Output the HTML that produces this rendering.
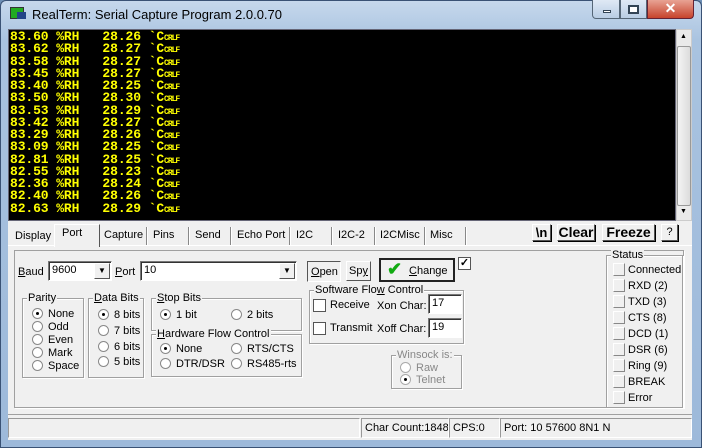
<!DOCTYPE html>
<html><head><meta charset="utf-8"><style>
*{margin:0;padding:0;box-sizing:border-box}
body{width:702px;height:448px;overflow:hidden;background:#6d8fb5;font-family:"Liberation Sans",sans-serif;font-size:11px;color:#000;position:relative}
.a{position:absolute}
#frame{left:0;top:0;width:702px;height:448px;border-radius:6px 6px 0 0;background:linear-gradient(#c6d8ec,#a9c3e0 40px,#9db9da);border:1px solid #3a5275}
#term{left:8px;top:29px;width:668px;height:192px;background:#000;border:1px solid #667;overflow:hidden}
#term pre{font-family:"Liberation Mono",monospace;font-weight:bold;font-size:13px;line-height:12.25px;color:#ff0;padding:1px 0 0 1px;letter-spacing:-0.1px}
#term pre small{font-size:8px;letter-spacing:-1px;line-height:0}
#sb{left:676px;top:29px;width:16px;height:192px;background:#eaeaea;border:1px solid #ccc}
#client{left:8px;top:221px;width:684px;height:219px;background:#f0f0f0}
.tab{position:absolute;top:8px;white-space:nowrap}
.sep{position:absolute;top:6px;width:2px;height:18px;border-left:1px solid #888;border-right:1px solid #fff}
.btn{position:absolute;background:#f0f0f0;border:1px solid;border-color:#fff #555 #555 #fff;box-shadow:1px 1px 0 #000;text-align:center;white-space:nowrap}
.grp{position:absolute;border:1px solid #a0a0a0;box-shadow:inset 1px 1px 0 #fff, 1px 1px 0 #fff}
.grp>.t{position:absolute;top:-8px;left:4px;background:#f0f0f0;padding:0 1px;line-height:14px;white-space:nowrap}
.r{position:absolute;width:11px;height:11px;border-radius:50%;background:#fff;border:1px solid #888}
.r.on::after{content:"";position:absolute;left:3px;top:3px;width:3px;height:3px;border-radius:50%;background:#000}
.lbl{position:absolute;white-space:nowrap;line-height:14px}
.edit{position:absolute;background:#fff;border:1px solid;border-color:#777 #fff #fff #777;box-shadow:inset 1px 1px 0 #333;padding:2px 3px;white-space:nowrap}
.led{position:absolute;width:12px;height:13px;border:1px solid;border-color:#fff #888 #888 #fff;background:#f0f0f0}
.st{position:absolute;top:197px;height:20px;border:1px solid;border-color:#999 #fff #fff #999;padding:3px 3px;font-size:11px;white-space:nowrap;overflow:hidden}
u{text-decoration:underline}
</style></head><body>
<div id="frame" class="a"></div>
<div class="a" style="left:10px;top:7px;width:14px;height:12px;background:#2a2;border:1px solid #333"></div>
<div class="a" style="left:17px;top:12px;width:9px;height:7px;background:#248;"></div>
<div class="a" style="left:32px;top:7px;font-size:13px;color:#000">RealTerm: Serial Capture Program 2.0.0.70</div>
<div class="a" style="left:592px;top:0;width:28px;height:19px;border:1px solid #567;border-top:none;border-radius:0 0 0 4px;background:linear-gradient(#dfe9f5,#b9cde4)"></div>
<div class="a" style="left:603px;top:10px;width:8px;height:3px;background:#fff;border:1px solid #345"></div>
<div class="a" style="left:620px;top:0;width:27px;height:19px;border:1px solid #567;border-top:none;background:linear-gradient(#dfe9f5,#b9cde4)"></div>
<div class="a" style="left:628px;top:5px;width:11px;height:9px;border:2px solid #345;background:#fff"></div>
<div class="a" style="left:647px;top:0;width:47px;height:19px;border:1px solid #623;border-top:none;border-radius:0 0 4px 0;background:linear-gradient(#e8a394,#c7432c);color:#fff;font-weight:bold;text-align:center;font-size:14px;line-height:17px">✕</div>
<div id="term" class="a"><pre>83.60 %RH   28.26 `C<small>CRLF</small>
83.62 %RH   28.27 `C<small>CRLF</small>
83.58 %RH   28.27 `C<small>CRLF</small>
83.45 %RH   28.27 `C<small>CRLF</small>
83.40 %RH   28.25 `C<small>CRLF</small>
83.50 %RH   28.30 `C<small>CRLF</small>
83.53 %RH   28.29 `C<small>CRLF</small>
83.42 %RH   28.27 `C<small>CRLF</small>
83.29 %RH   28.26 `C<small>CRLF</small>
83.09 %RH   28.25 `C<small>CRLF</small>
82.81 %RH   28.25 `C<small>CRLF</small>
82.55 %RH   28.23 `C<small>CRLF</small>
82.36 %RH   28.24 `C<small>CRLF</small>
82.40 %RH   28.26 `C<small>CRLF</small>
82.63 %RH   28.29 `C<small>CRLF</small></pre></div>
<div id="sb" class="a"><div class="a" style="left:3px;top:3px;font-size:7px">▲</div><div class="a" style="left:0;top:16px;width:14px;height:160px;background:linear-gradient(90deg,#f4f4f4,#dcdcdc);border:1px solid #999;border-radius:2px"></div><div class="a" style="left:3px;top:178px;font-size:7px">▼</div></div>
<div id="client" class="a">
 <div class="a" style="left:0;top:24px;width:684px;height:1px;background:#fff"></div>
 <div class="a" style="left:46px;top:3px;width:46px;height:23px;border:1px solid #fff;border-right:1px solid #555;border-bottom:none;background:#f0f0f0"></div>
 <div class="tab" style="left:7px;top:9px">Display</div>
 <div class="tab" style="left:54px;top:6px">Port</div>
 <div class="tab" style="left:96px">Capture</div>
 <div class="sep" style="left:138px"></div>
 <div class="tab" style="left:145px">Pins</div>
 <div class="sep" style="left:180px"></div>
 <div class="tab" style="left:187px">Send</div>
 <div class="sep" style="left:222px"></div>
 <div class="tab" style="left:229px">Echo Port</div>
 <div class="sep" style="left:281px"></div>
 <div class="tab" style="left:288px">I2C</div>
 <div class="sep" style="left:323px"></div>
 <div class="tab" style="left:330px">I2C-2</div>
 <div class="sep" style="left:366px"></div>
 <div class="tab" style="left:372px">I2CMisc</div>
 <div class="sep" style="left:416px"></div>
 <div class="tab" style="left:422px">Misc</div>
 <div class="sep" style="left:457px"></div>
 <div class="btn" style="left:524px;top:3px;width:19px;height:17px;font-weight:bold;font-size:13px;line-height:15px">\n</div>
 <div class="btn" style="left:549px;top:3px;width:38px;height:17px;font-weight:bold;font-size:14px;line-height:15px">Clear</div>
 <div class="btn" style="left:594px;top:3px;width:53px;height:17px;font-weight:bold;font-size:14px;line-height:15px">Freeze</div>
 <div class="btn" style="left:653px;top:3px;width:17px;height:17px;line-height:15px">?</div>
 <div class="a" style="left:6px;top:29px;width:670px;height:158px;border:1px solid #a0a0a0;box-shadow:1px 1px 0 #fff"></div>
 <div class="lbl" style="left:10px;top:44px"><u>B</u>aud</div>
 <div class="edit" style="left:40px;top:40px;width:64px;height:20px">9600</div>
 <div class="btn" style="left:86px;top:42px;width:16px;height:16px;font-size:8px;line-height:14px;box-shadow:none">▼</div>
 <div class="lbl" style="left:107px;top:44px"><u>P</u>ort</div>
 <div class="edit" style="left:132px;top:40px;width:157px;height:20px">10</div>
 <div class="btn" style="left:271px;top:42px;width:16px;height:16px;font-size:8px;line-height:14px;box-shadow:none">▼</div>
 <div class="a" style="left:299px;top:40px;width:34px;height:21px;border:1px solid;border-color:#555 #fff #fff #555;padding:4px 3px"><u>O</u>pen</div>
 <div class="btn" style="left:338px;top:40px;width:25px;height:20px;padding-top:3px;box-shadow:none">Sp<u>y</u></div>
 <div class="btn" style="left:371px;top:37px;width:76px;height:24px;border:2px solid #222;box-shadow:none;padding-top:4px"><span style="color:#1a1;font-weight:bold;font-size:18px;position:absolute;left:6px;top:-1px">✔</span><span style="position:absolute;left:28px;top:5px"><u>C</u>hange</span></div>
 <div class="a" style="left:450px;top:36px;width:13px;height:13px;background:#fff;border:1px solid #555;font-size:11px;line-height:11px;text-align:center;font-weight:bold">✓</div>
 <div class="grp" style="left:14px;top:77px;width:62px;height:80px"><div class="t">Parity</div></div>
 <div class="r on" style="left:24px;top:87px"></div><div class="lbl" style="left:40px;top:86px">None</div>
 <div class="r" style="left:24px;top:100px"></div><div class="lbl" style="left:40px;top:99px">Odd</div>
 <div class="r" style="left:24px;top:113px"></div><div class="lbl" style="left:40px;top:112px">Even</div>
 <div class="r" style="left:24px;top:126px"></div><div class="lbl" style="left:40px;top:125px">Mark</div>
 <div class="r" style="left:24px;top:139px"></div><div class="lbl" style="left:40px;top:138px">Space</div>
 <div class="grp" style="left:80px;top:77px;width:56px;height:80px"><div class="t"><u>D</u>ata Bits</div></div>
 <div class="r on" style="left:90px;top:88px"></div><div class="lbl" style="left:106px;top:87px">8 bits</div>
 <div class="r" style="left:90px;top:104px"></div><div class="lbl" style="left:106px;top:103px">7 bits</div>
 <div class="r" style="left:90px;top:120px"></div><div class="lbl" style="left:106px;top:119px">6 bits</div>
 <div class="r" style="left:90px;top:135px"></div><div class="lbl" style="left:106px;top:134px">5 bits</div>
 <div class="grp" style="left:143px;top:77px;width:151px;height:33px"><div class="t"><u>S</u>top Bits</div></div>
 <div class="r on" style="left:152px;top:88px"></div><div class="lbl" style="left:168px;top:87px">1 bit</div>
 <div class="r" style="left:223px;top:88px"></div><div class="lbl" style="left:239px;top:87px">2 bits</div>
 <div class="grp" style="left:143px;top:113px;width:151px;height:43px"><div class="t"><u>H</u>ardware Flow Control</div></div>
 <div class="r on" style="left:152px;top:122px"></div><div class="lbl" style="left:168px;top:121px">None</div>
 <div class="r" style="left:223px;top:122px"></div><div class="lbl" style="left:239px;top:121px">RTS/CTS</div>
 <div class="r" style="left:152px;top:137px"></div><div class="lbl" style="left:168px;top:136px">DTR/DSR</div>
 <div class="r" style="left:223px;top:137px"></div><div class="lbl" style="left:239px;top:136px">RS485-rts</div>
 <div class="grp" style="left:301px;top:69px;width:155px;height:54px"><div class="t">Software Flo<u>w</u> Control</div></div>
 <div class="a" style="left:305px;top:78px;width:13px;height:13px;background:#fff;border:1px solid #555"></div><div class="lbl" style="left:322px;top:77px">Receive</div>
 <div class="lbl" style="left:369px;top:78px">Xon Char:</div><div class="edit" style="left:420px;top:73px;width:34px;height:20px">17</div>
 <div class="a" style="left:305px;top:101px;width:13px;height:13px;background:#fff;border:1px solid #555"></div><div class="lbl" style="left:322px;top:100px">Transmit</div>
 <div class="lbl" style="left:369px;top:101px">Xoff Char:</div><div class="edit" style="left:420px;top:97px;width:34px;height:20px">19</div>
 <div class="grp" style="left:383px;top:134px;width:71px;height:34px;color:#888"><div class="t">Winsock is:</div></div>
 <div class="r" style="left:392px;top:141px;border-color:#aaa"></div><div class="lbl" style="left:408px;top:140px;color:#888">Raw</div>
 <div class="r on" style="left:392px;top:153px;border-color:#aaa"></div><div class="lbl" style="left:408px;top:152px;color:#888">Telnet</div>
 <div class="grp" style="left:598px;top:34px;width:77px;height:153px"><div class="t">Status</div></div>
 <div class="led" style="left:605px;top:42px"></div><div class="lbl" style="left:620px;top:42px">Connected</div>
 <div class="led" style="left:605px;top:58px"></div><div class="lbl" style="left:620px;top:58px">RXD (2)</div>
 <div class="led" style="left:605px;top:74px"></div><div class="lbl" style="left:620px;top:74px">TXD (3)</div>
 <div class="led" style="left:605px;top:90px"></div><div class="lbl" style="left:620px;top:90px">CTS (8)</div>
 <div class="led" style="left:605px;top:106px"></div><div class="lbl" style="left:620px;top:106px">DCD (1)</div>
 <div class="led" style="left:605px;top:122px"></div><div class="lbl" style="left:620px;top:122px">DSR (6)</div>
 <div class="led" style="left:605px;top:138px"></div><div class="lbl" style="left:620px;top:138px">Ring (9)</div>
 <div class="led" style="left:605px;top:154px"></div><div class="lbl" style="left:620px;top:154px">BREAK</div>
 <div class="led" style="left:605px;top:170px"></div><div class="lbl" style="left:620px;top:170px">Error</div>
 <div class="a" style="left:0;top:193px;width:684px;height:1px;background:#a0a0a0"></div>
 <div class="st" style="left:0;width:352px"></div>
 <div class="st" style="left:353px;width:88px">Char Count:1848</div>
 <div class="st" style="left:441px;width:51px">CPS:0</div>
 <div class="st" style="left:492px;width:192px">Port: 10 57600 8N1 N</div>
</div>
</body></html>
